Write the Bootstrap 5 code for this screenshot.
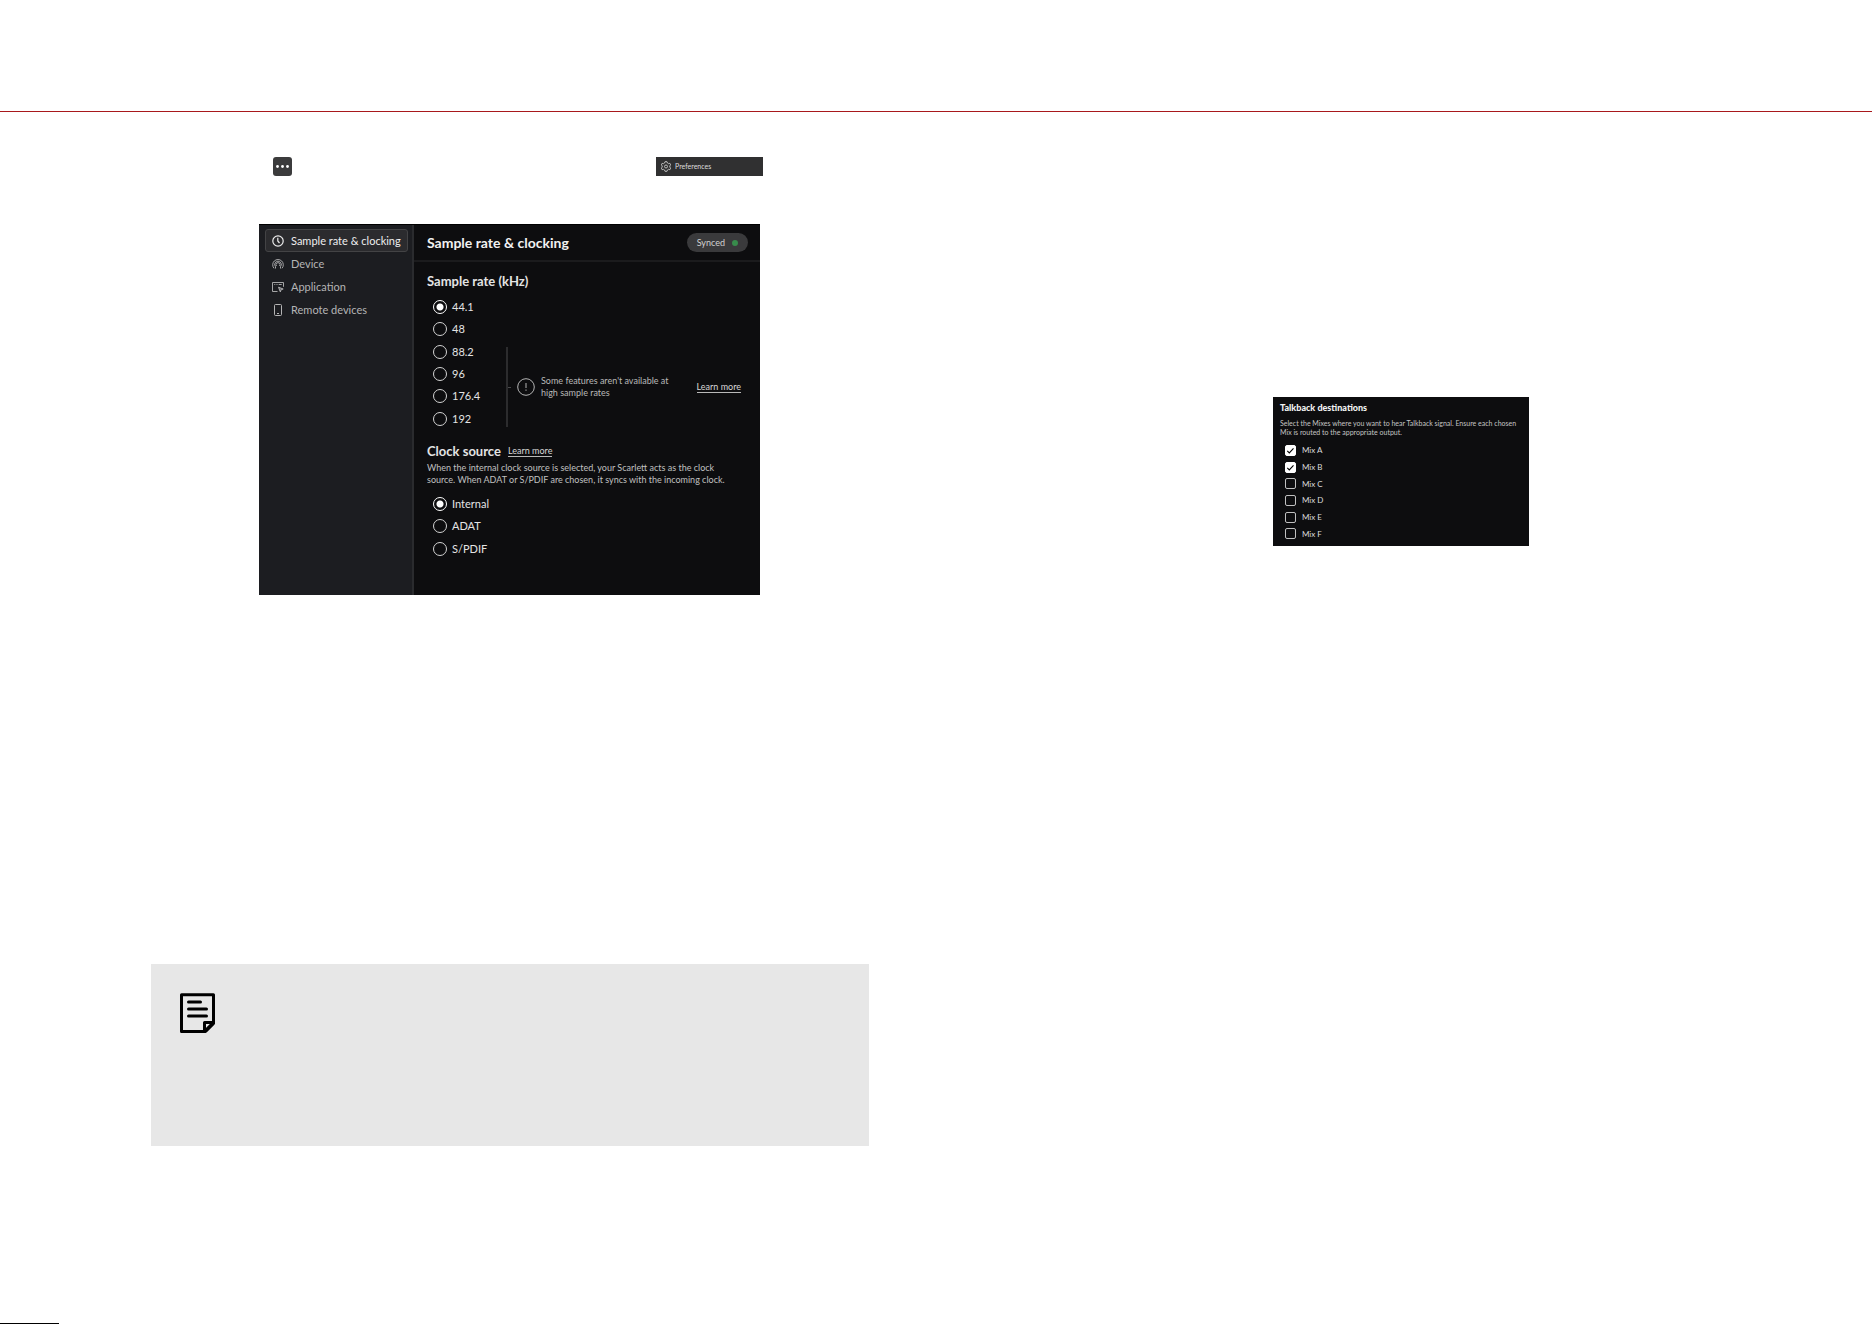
<!DOCTYPE html>
<html lang="en">
<head>
<meta charset="utf-8">
<meta name="viewport" content="width=device-width, initial-scale=1">
<title>Focusrite Control – Preferences</title>
<link href="https://cdn.jsdelivr.net/npm/bootstrap@5.3.0/dist/css/bootstrap.min.css" rel="stylesheet">
<style>
body{font-family:Lato,"Noto Sans",sans-serif;background:#fff}
.page-head{height:112px;border-bottom:1px solid #a8181c}
.left-col{padding:45px 67px 0 151px}
.tool-row{padding:0 106px 0 122px;height:19px}
.more-btn{width:19px;height:19px;background:#3b3b3c;border-radius:3px}
.pref-btn{width:107px;height:19px;background:#303031;color:#ddd;font-size:7px;gap:4px;padding:0 5px}
.app-panel{width:70%;max-width:501px;min-height:371px;margin-top:48px;margin-left:108px;background:#0d0d0f;color:#e4e4e4;border-top:1px solid #000}
.side-nav{width:155px;background:#1c1d21;border-right:2px solid #2a2b2e;padding:4px 4px 4px 6px}
.side-nav .nav-link{height:23px;font-size:11px;line-height:21px;color:#b4b4b5;border:1px solid transparent;border-radius:3px;padding:0 6px;gap:7px}
.side-nav .nav-link.active{background:#2b2b2e;border-color:#434345;color:#eee}
.pane-head{height:37px;border-bottom:2px solid #1b1b1d;padding:0 12px 0 13px}
.pane-title{font-size:14px;line-height:18px;font-weight:700;color:#f2f2f2}
.sync-pill{height:19px;font-size:9px;background:#3a3a3c;color:#d2d2d2;padding:0 10px;gap:7px;font-weight:400}
.sync-dot{width:6px;height:6px;background:#388c4c}
.pane-body{padding:11px 19px 0 13px}
.sec-title{font-size:13px;line-height:16px;font-weight:700}
.opt-list{padding-left:6px}
.opt-row{gap:5px;font-size:11px;line-height:22px}
.opt-row .form-check-input{width:14px;height:14px;background-color:transparent;border:1px solid #d4d4d4;margin:0}
.opt-row .form-check-input:checked{border-color:#fff;background:radial-gradient(circle,#fff 3px,transparent 4px)}
.rates{width:79px;height:134px;margin-top:7px}
.clocks{height:67px;margin-top:7px}
.brace{width:2px;height:80px;background:#2c2c2e}
.brace-tick{width:3px;height:1px;background:#4a4a4c}
.rate-notice{height:80px;margin-bottom:3px;font-size:9px;line-height:12px;color:#b8b8b8}
.rate-notice svg{margin:0 6px}
.tiny-link{font-size:9px;line-height:10px;color:#d8d8d8;border-bottom:1px solid #b8b8b8}
.tiny-link:hover{color:#fff}
.clock-head{margin-top:13px;gap:7px}
.clock-desc{font-size:9px;line-height:12px;color:#c0c0c0;margin-top:3px}
.note-box{margin-top:369px;min-height:182px;background:#e7e7e7;padding:29px}
.right-col{padding:285px 0 0 337px}
.talk-panel{width:256px;background:#0d0d0f;color:#e0e0e0;padding:4px 4px 4px 7px;height:149px}
.talk-title{font-size:9px;line-height:14px;font-weight:900;color:#f2f2f2}
.talk-desc{font-size:7px;line-height:9px;color:#c4c4c4;margin-top:4px}
.mix-list{height:100px;padding-left:5px;margin-top:5px}
.mix-row{gap:6px;font-size:8px;line-height:16px;color:#dcdcdc}
.mix-row .form-check-input{width:11px;height:11px;margin:0;border:1px solid #c0c0c0;border-radius:2px;background-color:transparent}
.mix-row .form-check-input:checked{background-color:#fff;border-color:#fff;background-size:100% 100%;background-image:url("data:image/svg+xml,%3csvg xmlns='http://www.w3.org/2000/svg' viewBox='0 0 9 9'%3e%3cpath fill='none' stroke='%23000' stroke-width='1.100' d='m1.300 4.900 2 2 4.200-4.600'/%3e%3c/svg%3e")}
.foot-rule{width:59px;height:1px;background:#000}
</style>
<script src="https://cdn.jsdelivr.net/npm/bootstrap@5.3.0/dist/js/bootstrap.bundle.min.js"></script>
</head>
<body class="d-flex flex-column min-vh-100">
<header class="page-head"></header>
<main class="row g-0">
  <section class="col-6 left-col">
    <div class="tool-row d-flex justify-content-between">
      <button type="button" class="more-btn border-0 p-0 d-flex align-items-center justify-content-center" aria-label="More">
        <svg width="15" height="5" viewBox="0 0 15 5" fill="#fff"><circle cx="2.5" cy="2.5" r="1.4"/><circle cx="7.5" cy="2.5" r="1.4"/><circle cx="12.5" cy="2.5" r="1.4"/></svg>
      </button>
      <button type="button" class="pref-btn border-0 d-flex align-items-center">
        <svg width="10" height="11" viewBox="0 0 10 11" fill="none" stroke="#c8c8c8" stroke-width=".9"><path d="M4 .7h2l.4 1.300 1.200.7 1.300-.4.8 1.600-.9 1v1.200l.9 1-.8 1.600-1.300-.4-1.200.7L6 10.300H4L3.600 9l-1.200-.7-1.300.4-.8-1.600.9-1V4.900l-.9-1 .8-1.600 1.300.4L3.600 2z"/><circle cx="5" cy="5.500" r="1.500"/></svg>
        Preferences
      </button>
    </div>

    <div class="app-panel d-flex">
      <nav class="side-nav nav flex-column flex-nowrap flex-shrink-0" aria-label="Preferences">
        <a class="nav-link active d-flex align-items-center" href="#clocking">
          <svg width="12" height="12" viewBox="0 0 12 12" fill="none" stroke="currentColor" stroke-width="1.200"><circle cx="6" cy="6" r="5.200"/><path d="M5.800 2.800V6l1.700 2"/></svg>
          Sample rate &amp; clocking</a>
        <a class="nav-link d-flex align-items-center" href="#device">
          <svg width="12" height="12" viewBox="0 0 12 12" fill="none" stroke="currentColor" stroke-width=".9"><path d="M2 10.300a5.300 5.300 0 1 1 8 0M3.500 10.500V8.700a3.300 3.300 0 1 1 5 0v1.800"/><path d="M4.500 8a2 2 0 1 1 3 0"/></svg>
          Device</a>
        <a class="nav-link d-flex align-items-center" href="#application">
          <svg width="12" height="12" viewBox="0 0 12 12" fill="none" stroke="currentColor" stroke-width=".9"><path d="M5.500 10.500h-5v-9h11v4.300"/><path d="M2.300 3.500h1M4.500 3.500h1M6.700 3.500h3"/><path d="m6.500 6.200 4.700 1.800-2 .7-.9 2.200z" fill="currentColor" fill-opacity=".5"/></svg>
          Application</a>
        <a class="nav-link d-flex align-items-center" href="#remote">
          <svg width="12" height="12" viewBox="0 0 12 12" fill="none" stroke="currentColor"><rect x="2.500" y=".5" width="7" height="11" rx="1"/><path d="M5 9.500h2"/></svg>
          Remote devices</a>
      </nav>

      <div class="flex-grow-1">
        <div class="pane-head d-flex align-items-center justify-content-between">
          <h1 class="pane-title mb-0">Sample rate &amp; clocking</h1>
          <span class="sync-pill rounded-pill d-flex align-items-center">Synced <span class="sync-dot rounded-circle"></span></span>
        </div>
        <div class="pane-body">
          <h2 class="sec-title mb-0" id="rate-title">Sample rate (kHz)</h2>
          <div class="d-flex align-items-end">
            <div class="opt-list rates d-flex flex-column flex-shrink-0" role="radiogroup" aria-labelledby="rate-title">
              <div class="opt-row flex-fill d-flex align-items-center"><input class="form-check-input" type="radio" name="rate" id="r1" checked><label for="r1">44.1</label></div>
              <div class="opt-row flex-fill d-flex align-items-center"><input class="form-check-input" type="radio" name="rate" id="r2"><label for="r2">48</label></div>
              <div class="opt-row flex-fill d-flex align-items-center"><input class="form-check-input" type="radio" name="rate" id="r3"><label for="r3">88.2</label></div>
              <div class="opt-row flex-fill d-flex align-items-center"><input class="form-check-input" type="radio" name="rate" id="r4"><label for="r4">96</label></div>
              <div class="opt-row flex-fill d-flex align-items-center"><input class="form-check-input" type="radio" name="rate" id="r5"><label for="r5">176.4</label></div>
              <div class="opt-row flex-fill d-flex align-items-center"><input class="form-check-input" type="radio" name="rate" id="r6"><label for="r6">192</label></div>
            </div>
            <div class="rate-notice flex-grow-1 d-flex align-items-center">
              <span class="brace"></span><span class="brace-tick"></span>
              <svg width="18" height="18" viewBox="0 0 18 18" fill="none" stroke="#b4b4b4"><circle cx="9" cy="9" r="8.300"/><path d="M9 5v5M9 11.500v1.300"/></svg>
              <span>Some features aren't available at<br>high sample rates</span>
              <a class="tiny-link text-decoration-none ms-auto" href="#rates-help">Learn more</a>
            </div>
          </div>
          <div class="clock-head d-flex align-items-center">
            <h2 class="sec-title mb-0" id="clock-title">Clock source</h2>
            <a class="tiny-link text-decoration-none" href="#clock-help">Learn more</a>
          </div>
          <p class="clock-desc mb-0">When the internal clock source is selected, your Scarlett acts as the clock<br>source. When ADAT or S/PDIF are chosen, it syncs with the incoming clock.</p>
          <div class="opt-list clocks d-flex flex-column" role="radiogroup" aria-labelledby="clock-title">
            <div class="opt-row flex-fill d-flex align-items-center"><input class="form-check-input" type="radio" name="clk" id="c1" checked><label for="c1">Internal</label></div>
            <div class="opt-row flex-fill d-flex align-items-center"><input class="form-check-input" type="radio" name="clk" id="c2"><label for="c2">ADAT</label></div>
            <div class="opt-row flex-fill d-flex align-items-center"><input class="form-check-input" type="radio" name="clk" id="c3"><label for="c3">S/PDIF</label></div>
          </div>
        </div>
      </div>
    </div>

    <aside class="note-box">
      <svg class="d-block" width="35" height="40" viewBox="0 0 35 40" fill="none" stroke="#000" stroke-width="3" stroke-linejoin="round"><path d="M1.500 1.800h32v28.700l-8 8h-24z"/><path d="M24.500 38.500v-9h9z"/><path d="M33 30.500l-7 7" stroke-width="3"/><path d="M8.500 9h12M8.500 16h18M8.500 23h18" stroke-width="3" stroke-linecap="round"/></svg>
    </aside>
  </section>

  <section class="col-6 right-col">
    <div class="talk-panel">
      <h2 class="talk-title mb-0" id="talk-title">Talkback destinations</h2>
      <p class="talk-desc mb-0">Select the Mixes where you want to hear Talkback signal. Ensure each chosen<br>Mix is routed to the appropriate output.</p>
      <div class="mix-list d-flex flex-column" role="group" aria-labelledby="talk-title">
        <div class="mix-row flex-fill d-flex align-items-center"><input class="form-check-input" type="checkbox" id="mA" checked><label for="mA">Mix A</label></div>
        <div class="mix-row flex-fill d-flex align-items-center"><input class="form-check-input" type="checkbox" id="mB" checked><label for="mB">Mix B</label></div>
        <div class="mix-row flex-fill d-flex align-items-center"><input class="form-check-input" type="checkbox" id="mC"><label for="mC">Mix C</label></div>
        <div class="mix-row flex-fill d-flex align-items-center"><input class="form-check-input" type="checkbox" id="mD"><label for="mD">Mix D</label></div>
        <div class="mix-row flex-fill d-flex align-items-center"><input class="form-check-input" type="checkbox" id="mE"><label for="mE">Mix E</label></div>
        <div class="mix-row flex-fill d-flex align-items-center"><input class="form-check-input" type="checkbox" id="mF"><label for="mF">Mix F</label></div>
      </div>
    </div>
  </section>
</main>
<footer class="mt-auto"><div class="foot-rule"></div></footer>
</body>
</html>
